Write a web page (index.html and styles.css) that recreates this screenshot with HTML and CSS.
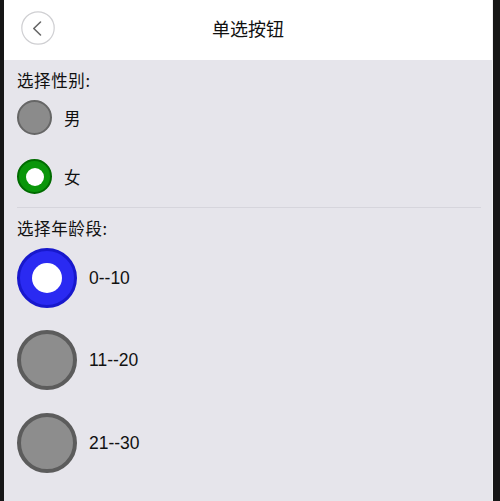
FILE: index.html
```html
<!DOCTYPE html>
<html lang="zh">
<head>
<meta charset="utf-8">
<title>单选按钮</title>
<link rel="stylesheet" href="styles.css">
</head>
<body>
<div class="screen">
  <header class="navbar">
    <button class="back" aria-label="返回">
      <svg width="34" height="34" viewBox="0 0 34 34">
        <circle cx="17" cy="17" r="16.2" fill="#fff" stroke="#cfcfd2" stroke-width="1.2"/>
        <path d="M19.5 11 L12.8 17.5 L19.5 24" fill="none" stroke="#666" stroke-width="1.6" stroke-linecap="round" stroke-linejoin="round"/>
      </svg>
    </button>
    <h1 class="title">单选按钮</h1>
  </header>
  <main class="content">
    <div class="section-title">选择性别:</div>
    <div class="row row-first">
      <span class="radio small off"></span>
      <span class="label">男</span>
    </div>
    <div class="row row-second">
      <span class="radio small green"><span class="dot"></span></span>
      <span class="label">女</span>
    </div>
    <div class="divider"></div>
    <div class="section-title section-title-2">选择年龄段:</div>
    <div class="row big-row first-big">
      <span class="radio big blue"><span class="dot"></span></span>
      <span class="label num">0--10</span>
    </div>
    <div class="row big-row second-big">
      <span class="radio big off-big"></span>
      <span class="label num">11--20</span>
    </div>
    <div class="row big-row third-big">
      <span class="radio big off-big"></span>
      <span class="label num">21--30</span>
    </div>
  </main>
</div>
</body>
</html>
```
FILE: styles.css
```css
html, body {
  margin: 0;
  padding: 0;
  background: #161616;
  height: 501px;
  overflow: hidden;
}
.screen {
  margin-left: 4px;
  width: 488px;
  height: 501px;
  border-right: 1px solid #eeeef0;
  background: #e6e5eb;
  font-family: "Noto Sans CJK SC", "Liberation Sans", sans-serif;
  color: #111;
}
.navbar {
  height: 60px;
  background: #fff;
  position: relative;
  display: flex;
  align-items: center;
  justify-content: center;
}
.back {
  position: absolute;
  left: 17px;
  top: 11px;
  width: 34px;
  height: 34px;
  padding: 0;
  margin: 0;
  border: 0;
  background: transparent;
  display: block;
}
.back svg { display: block; }
.title {
  margin: 0 0 4px 0;
  font-size: 18px;
  font-weight: 400;
  line-height: 24px;
  color: #111;
}
.content {
  padding: 9px 11px 0 13px;
}
.section-title {
  font-size: 16.5px;
  letter-spacing: 0.6px;
  line-height: 22px;
  height: 22px;
}
.row {
  display: flex;
  align-items: center;
}
.row-first { margin-top: 9px; }
.row-second { margin-top: 24px; }
.radio {
  box-sizing: border-box;
  border-radius: 50%;
  display: flex;
  align-items: center;
  justify-content: center;
  flex: none;
}
.small { width: 35px; height: 35px; }
.big { width: 60px; height: 60px; }
.off {
  background: #8b8b8b;
  border: 2px solid #666;
}
.green {
  background: #0a960a;
  border: 2px solid #006b00;
}
.green .dot {
  width: 18px;
  height: 18px;
  border-radius: 50%;
  background: #fff;
}
.blue {
  background: #2a2af2;
  border: 3px solid #1818cc;
}
.blue .dot {
  width: 30px;
  height: 30px;
  border-radius: 50%;
  background: #fff;
}
.off-big {
  background: #8d8d8d;
  border: 4px solid #5c5c5c;
}
.label {
  margin-left: 12px;
  font-size: 16.5px;
  line-height: 22px;
}
.num {
  font-family: "Liberation Sans", "Noto Sans", sans-serif;
  font-size: 17.5px;
}
.divider {
  margin-top: 13px;
  height: 1px;
  background: #d6d5dc;
  margin-right: 0;
}
.section-title-2 { margin-top: 9px; }
.first-big { margin-top: 9px; }
.second-big { margin-top: 22px; }
.third-big { margin-top: 23px; }
```
